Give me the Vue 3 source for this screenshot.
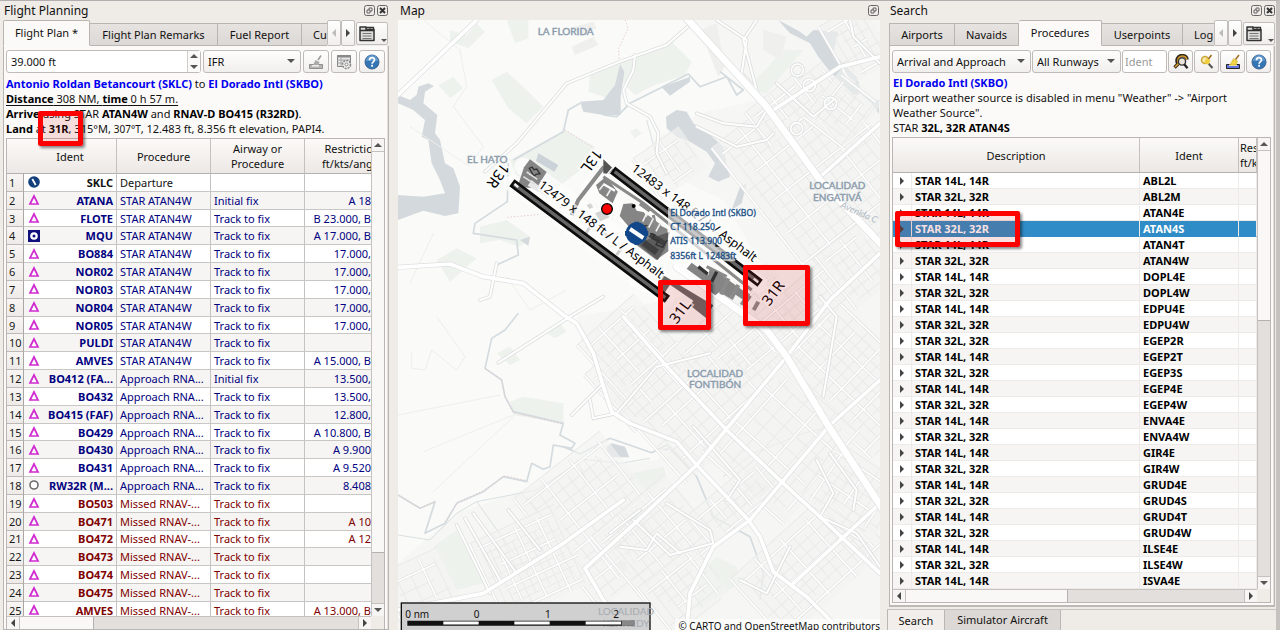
<script setup>
const planRows = [
  ['SKLC', 'Departure', '', '', 'airport'],
  ['ATANA', 'STAR ATAN4W', 'Initial fix', 'A 18', 'fix'],
  ['FLOTE', 'STAR ATAN4W', 'Track to fix', 'B 23.000, B', 'fix'],
  ['MQU', 'STAR ATAN4W', 'Track to fix', 'A 17.000, B', 'vor'],
  ['BO884', 'STAR ATAN4W', 'Track to fix', '17.000,', 'fix'],
  ['NOR02', 'STAR ATAN4W', 'Track to fix', '17.000,', 'fix'],
  ['NOR03', 'STAR ATAN4W', 'Track to fix', '17.000,', 'fix'],
  ['NOR04', 'STAR ATAN4W', 'Track to fix', '17.000,', 'fix'],
  ['NOR05', 'STAR ATAN4W', 'Track to fix', '17.000,', 'fix'],
  ['PULDI', 'STAR ATAN4W', 'Track to fix', '', 'fix'],
  ['AMVES', 'STAR ATAN4W', 'Track to fix', 'A 15.000, B', 'fix'],
  ['BO412 (FA...', 'Approach RNA...', 'Initial fix', '13.500,', 'fix'],
  ['BO432', 'Approach RNA...', 'Track to fix', '13.500,', 'fix'],
  ['BO415 (FAF)', 'Approach RNA...', 'Track to fix', '12.800,', 'fix'],
  ['BO429', 'Approach RNA...', 'Track to fix', 'A 10.800, B', 'fix'],
  ['BO430', 'Approach RNA...', 'Track to fix', 'A 9.900', 'fix'],
  ['BO431', 'Approach RNA...', 'Track to fix', 'A 9.520', 'fix'],
  ['RW32R (M...', 'Approach RNA...', 'Track to fix', '8.408', 'runway'],
  ['BO503', 'Missed RNAV-...', 'Track to fix', '', 'fix'],
  ['BO471', 'Missed RNAV-...', 'Track to fix', 'A 10', 'fix'],
  ['BO472', 'Missed RNAV-...', 'Track to fix', 'A 12', 'fix'],
  ['BO473', 'Missed RNAV-...', 'Track to fix', '', 'fix'],
  ['BO474', 'Missed RNAV-...', 'Track to fix', '', 'fix'],
  ['BO475', 'Missed RNAV-...', 'Track to fix', '', 'fix'],
  ['AMVES', 'Missed RNAV-...', 'Track to fix', 'A 13.000, B', 'fix'],
].map(([ident, proc, airway, limit, icon], i) => ({
  n: i + 1, ident, proc, airway, limit, icon,
  tone: i === 0 ? 'dep' : i < 18 ? 'star' : 'missed',
}))

const north = 'STAR 14L, 14R'
const south = 'STAR 32L, 32R'
const procRows = [
  ['ABL2L', north], ['ABL2M', south], ['ATAN4E', north], ['ATAN4S', south],
  ['ATAN4T', north], ['ATAN4W', south], ['DOPL4E', north], ['DOPL4W', south],
  ['EDPU4E', north], ['EDPU4W', south], ['EGEP2R', south], ['EGEP2T', north],
  ['EGEP3S', south], ['EGEP4E', north], ['EGEP4W', south], ['ENVA4E', north],
  ['ENVA4W', south], ['GIR4E', north], ['GIR4W', south], ['GRUD4E', north],
  ['GRUD4S', south], ['GRUD4T', north], ['GRUD4W', south], ['ILSE4E', north],
  ['ILSE4W', south], ['ISVA4E', north],
]

// Street blocks: centre x, centre y, angle, width, height, spacing
const blocks = [
  [1290, 520, -38, 420, 520, 34], [1180, 330, -38, 190, 130, 30], [1400, 130, -30, 150, 200, 26],
  [840, 490, -35, 170, 150, 32], [1010, 1120, -42, 620, 330, 38], [760, 1120, -42, 270, 230, 32],
  [720, 1040, -42, 230, 220, 28], [1390, 1130, -46, 280, 420, 30], [1180, 1330, -48, 360, 330, 44],
  [630, 1560, -38, 330, 420, 34], [420, 1690, -25, 280, 260, 24], [800, 1620, -40, 290, 270, 36],
  [1260, 1690, -42, 420, 250, 32], [1390, 1480, -56, 210, 250, 30], [1030, 1510, -40, 260, 120, 28],
  [90, 1760, -25, 190, 170, 42], [880, 1770, -38, 210, 180, 30], [1190, 960, -40, 500, 140, 27],
  [1400, 800, -38, 160, 200, 30], [1360, 330, -52, 180, 160, 28],
]
function grid(w, h, s) {
  let wide = ''
  let fine = ''
  let i = 0
  for (let x = -w / 2; x <= w / 2; x += s, i++) {
    const a = ((i * 37) % 11) * 5
    const d = `M${x} ${-h / 2 + a}V${h / 2 - ((i * 23) % 9) * 6}`
    if (i % 3 === 0) wide += d
    else fine += d
  }
  i = 0
  for (let y = -h / 2; y <= h / 2; y += s, i++) {
    const a = ((i * 29) % 13) * 5
    const d = `M${-w / 2 + a} ${y}H${w / 2 - ((i * 17) % 7) * 8}`
    if (i % 3 === 1) wide += d
    else fine += d
  }
  return { wide, fine }
}
const streets = blocks.map(([x, y, r, w, h, s]) => ({
  t: `translate(${x} ${y}) rotate(${r})`, w, h, ...grid(w, h, s),
}))

const minorRoads = [
  'M285 515L380 430L530 250L690 185L830 135L905 70',
  'M735 165L730 210L700 270L710 310L780 350L805 400L800 460L830 520',
  'M980 60L1070 120L1055 220L1100 270L1060 120L1100 60',
  'M325 1088L540 950L640 890', 'M545 1245L640 1150', 'M320 790L300 890L270 900',
  'M920 340L1000 370L1100 380L1130 330L1190 390', 'M920 380L1040 440L1130 420L1150 400',
  'M660 1600L750 1530', 'M355 1530L450 1650', 'M830 1510L960 1590L970 1630L840 1665L730 1560',
  'M1050 1740L1130 1780L1200 1640', 'M1290 890L1340 950L1300 1190', 'M200 1575L300 1780M225 1555L330 1740M250 1540L380 1720',
  'M1280 1380L1330 1480L1290 1550L1400 1600L1470 1700', 'M1320 1360L1400 1470L1390 1530',
  'M600 1200L610 1255L680 1240L800 1100L960 1060', 'M910 1280L1050 1440L1010 1500',
  'M1380 60L1390 110L1470 190', 'M1160 250L1270 350L1330 300', 'M690 1640L770 1650L800 1600L870 1660',
]
const majorRoads = [
  'M24 285L260 60', 'M24 802L180 792L280 830L400 850L520 945L560 970L610 1060L640 1160L665 1235L720 1270L860 1325L920 1395L1075 1560L1110 1610L1150 1715L1250 1790L1350 1890',
  'M585 1705L740 1565L920 1395L1190 1070L1320 900L1470 760',
  'M890 1890L900 1780L970 1640L1080 1560L1320 1275L1470 1140', 'M585 1705L640 1800L680 1850',
  'M700 950L840 1110L1010 1290L1180 1450L1300 1560L1470 1720', 'M24 1830L280 1780L520 1630L700 1500',
  'M1210 1750L1470 1510', 'M1280 540L1470 370', 'M1150 330L1350 200L1470 170',
]
</script>

<template>
  <div class="workspace">
    <section class="dock plan-dock">
      <header class="dock-title">
        <h2>Flight Planning</h2>
        <button class="mini" aria-label="Float panel"><svg viewBox="0 0 11 11"><rect x=".5" y=".5" width="10" height="10" rx="2" /><path d="M3 5h3v3H3zM5 5V3h3v3H6" /></svg></button>
        <button class="mini" aria-label="Close panel"><svg viewBox="0 0 11 11"><rect x=".5" y=".5" width="10" height="10" rx="2" /><path class="bold" d="M3 3l5 5M8 3L3 8" /></svg></button>
      </header>
      <nav class="tabs">
        <button class="tab on w-plan">Flight Plan *</button>
        <button class="tab w-remarks">Flight Plan Remarks</button>
        <button class="tab w-fuel">Fuel Report</button>
        <button class="tab cut">Cu</button>
        <button class="tab-nav" aria-label="Previous tabs"><i class="tri left dim"></i></button>
        <button class="tab-nav" aria-label="Next tabs"><i class="tri right"></i></button>
        <button class="tab-menu" aria-label="Tab menu"><svg viewBox="0 0 16 16"><path d="M1 14.500V1h6v2.500h8v11z" fill="#dededc" stroke="#333" stroke-width="1.500" stroke-linejoin="round" /><path d="M7 1.500h7.500V4" stroke="#333" stroke-width="1.300" fill="none" /><path d="M11 1.500v2" stroke="#333" /><path d="M1 4.500h14" stroke="#333" stroke-width="1.500" /><path d="M3.500 7.500h9M3.500 10h9M3.500 12.500h9" stroke="#777" /></svg><i class="tri down small"></i></button>
      </nav>
      <div class="pane plan-pane">
        <div class="toolbar">
          <div class="spin">
            <input value="39.000 ft" aria-label="Cruise altitude" />
            <span class="steps">
              <button aria-label="Increase"><i class="tri up"></i></button>
              <button aria-label="Decrease"><i class="tri down"></i></button>
            </span>
          </div>
          <div class="combo rules"><select aria-label="Flight rules"><option>IFR</option></select><i class="tri down"></i></div>
          <button class="tool" aria-label="Clean up"><svg viewBox="0 0 16 16"><path d="M1.500 10.500h13v4h-13z" fill="#b5b5b5" stroke="#8f8f8f" /><path d="M4 11h7v1.500H4z" fill="#eee" /><path d="M13 1.500L10 6" stroke="#999" stroke-width="1.500" /><path d="M7.500 6l4 2-1 3H5z" fill="#aaa" /></svg></button>
          <button class="tool" aria-label="Table settings"><svg viewBox="0 0 16 16"><path d="M1.500 1.500h13v11h-13z" fill="#e6e6e6" stroke="#888" /><path d="M1 2.500h14" stroke="#888" stroke-width="2" /><path d="M2 6h12M2 9h12M5 4v8" stroke="#aaa" /><circle cx="10.500" cy="10.500" r="4" fill="#eee" stroke="#888" stroke-width="1.500" stroke-dasharray="2 1" /><circle cx="10.500" cy="10.500" r="1.500" fill="#fff" stroke="#888" /></svg></button>
          <button class="tool" aria-label="Help"><svg viewBox="0 0 16 16"><circle cx="8" cy="8" r="7" fill="#3475b4" stroke="#3b6390" /><path d="M2 7a6 6 0 0 1 12 0z" fill="#5f97cc" /><path d="M5.500 6.200c0-3.400 5-3.400 5-.3 0 1.900-2.400 2-2.400 3.800M8.100 10.800v1.900" stroke="#fff" stroke-width="1.700" fill="none" /></svg></button>
        </div>
        <div class="summary">
          <p><a href="#sklc">Antonio Roldan Betancourt (SKLC)</a> to <a href="#skbo">El Dorado Intl (SKBO)</a></p>
          <p><u><b>Distance</b> 308 NM, <b>time</b> 0 h 57 m.</u></p>
          <p><b>Arrive</b> using STAR <b>ATAN4W</b> and <b>RNAV-D BO415 (R32RD)</b>.</p>
          <p><b>Land</b> at <b>31R</b>, 315°M, <small>307°T</small>, 12.483 ft, 8.356 ft elevation, PAPI4.</p>
          <div class="mark mark-land"></div>
        </div>
        <div class="grid-frame">
          <div class="clip">
            <table class="plan">
              <colgroup><col class="c-num" /><col class="c-ico" /><col class="c-ident" /><col class="c-proc" /><col class="c-proc" /><col /></colgroup>
              <thead><tr><th></th><th colspan="2">Ident</th><th>Procedure</th><th>Airway or<br />Procedure</th><th><span class="wide-head">Restriction<br />ft/kts/angle</span></th></tr></thead>
              <tbody>
                <tr v-for="r in planRows" :key="r.n" :class="r.tone">
                  <th scope="row">{{ r.n }}</th>
                  <td class="ico">
                    <svg viewBox="0 0 12 12">
                      <path v-if="r.icon === 'fix'" d="M6 2L10 10H2z" fill="#fff" stroke="#d02ad0" stroke-width="1.700" />
                      <g v-else-if="r.icon === 'airport'"><circle cx="6" cy="6" r="5.800" fill="#123f7c" /><path d="M4.300 3l3.400 6" stroke="#fff" stroke-width="1.800" /></g>
                      <g v-else-if="r.icon === 'vor'"><path d="M0 0h12v12H0z" fill="#10107c" /><circle cx="6" cy="6" r="3.800" fill="#fff" /><circle cx="6" cy="6" r="1.500" fill="#10107c" /></g>
                      <circle v-else cx="6" cy="6" r="4" fill="#fff" stroke="#6c6c6c" stroke-width="1.600" />
                    </svg>
                  </td>
                  <td class="ident">{{ r.ident }}</td>
                  <td>{{ r.proc }}</td>
                  <td>{{ r.airway }}</td>
                  <td class="limit">{{ r.limit }}</td>
                </tr>
              </tbody>
            </table>
          </div>
          <div class="vbar plan-vbar"><button aria-label="Scroll up"><i class="tri up"></i></button><div class="track"><div class="thumb"></div></div><button aria-label="Scroll down"><i class="tri down"></i></button></div>
          <div class="hbar plan-hbar"><button aria-label="Scroll left"><i class="tri left"></i></button><div class="track"><div class="thumb"></div></div><button aria-label="Scroll right"><i class="tri right"></i></button></div>
          <div class="corner"></div>
        </div>
      </div>
    </section>

    <section class="dock map-dock">
      <header class="dock-title">
        <h2>Map</h2>
        <button class="mini" aria-label="Float panel"><svg viewBox="0 0 11 11"><rect x=".5" y=".5" width="10" height="10" rx="2" /><path d="M3 5h3v3H3zM5 5V3h3v3H6" /></svg></button>
      </header>
      <div class="map">
        <svg class="chart" viewBox="24 60 1446 1830" preserveAspectRatio="xMinYMin slice" role="img" aria-label="Map of El Dorado Intl">
          <rect x="24" y="60" width="2400" height="1830" fill="#fafaf8" />
          <!-- built-up areas -->
          <path d="M900 60H1480V1890H24V1690L200 1540L400 1470L590 1400L800 1380L870 1330L680 1260L640 1150L560 950L830 900L1130 820L1000 600L830 520L790 420L930 340L1100 300L1000 180Z" fill="#f6f6f4" />
          <!-- parks and fields -->
          <g fill="#eef2ed">
            <path d="M305 240l45-25 60 55 50 50-50 50-55-45zM145 255l45-25 30 35-40 30zM350 60h65v55l-40 15zM180 90l50 15 30-35 25 25-50 50-55-20zM600 220l95-40 150-55 60 60-20 40-90 30-60 30-40-40-40 50-60-20zM360 480l165-90 90 50-30 60-120 90-85-60zM140 780l60-35 60 30-80 70zM270 680l80-20 70 50-30 30-60-20-60 10zM360 1205l40-15 120 20 0 60-150-25zM130 1640l70-50 80 160-80 20z" />
            <path d="M980 1670l60 30 10 50-130 80 10-110zM1060 1420l60-50 50 60-60 60-50 30zM470 1000l40-30 20 25-35 20zM700 1425l120-25 10 30-50 50zM1070 270l110-120 60 0-110 130zM720 395l20-10 15 15-20 15zM320 1060l40-20 30 40-30 15z" />
          </g>
          <g fill="#efefed">
            <path d="M545 140l65-30 15 25-70 30zM550 80l60-15 10 20-55 25zM930 90l50-20 25 130-20 30zM1120 90l70 20-20 70-50-30z" />
          </g>
          <!-- water -->
          <g fill="#d3d9dc">
            <path d="M24 285L60 300L80 285L85 260L115 250L132 258L105 275L100 310L142 345L135 400L150 420L165 490L190 505L210 560L205 640L165 648L100 632L24 660V585L100 590L165 580L150 540L125 490L115 420L95 410L105 360L70 330L24 310Z" />
            <path d="M690 193L703 215L692 290L692 345L640 345L580 335L570 305L640 300L675 255Z" />
            <path d="M828 350L860 330L890 335L910 370L960 405L1000 440L1012 500L1020 530L985 545L955 530L975 490L950 455L900 425L860 410L830 385Z" />
            <path d="M1165 60L1230 95L1250 110L1270 90L1345 95L1330 160L1400 230L1415 280L1390 285L1320 215L1285 170L1260 130L1200 100Z" />
            <path d="M815 262L900 230L900 245L840 287ZM650 1340L665 1330L705 1340L718 1372L655 1372ZM390 720l30-10-5 28zM680 1670l30 18-5 30-22-22zM812 1347l25-2-5 8zM1068 1085l20-5-15 35-10 10zM1050 560l20-10-15 60-30 20zM1412 282l55 20v40l-20-30z" />
          </g>
          <g fill="none" stroke="#d3dbdf" stroke-width="5" stroke-linejoin="round">
            <path d="M570 310L535 330L520 395L440 440L370 480M640 345L680 350L720 310L895 222L930 260L1010 230L1040 285L1060 270L990 215M385 940L345 990L305 1015L285 1105L335 1140L345 1190L370 1235L520 1270L510 1305L555 1330L545 1345L490 1335L480 1400L460 1408L425 1390L410 1445L340 1430L280 1475L200 1510L165 1570L105 1600L135 1505L90 1525L24 1485" />
            <path d="M520 1340L570 1362L660 1315L785 1358L830 1335L920 1430L970 1550L1080 1610L1120 1720L1110 1800M355 490L352 605L255 670L250 700L380 720L385 765L320 795" />
          </g>
          <g fill="none" stroke="#d9e0e3" stroke-width="3">
            <path d="M24 1605L120 1620L200 1540L260 1505L440 1470L580 1378L690 1390L780 1375M260 1505L375 1665M390 1475L540 1650M1090 1360L1330 1600M1090 1360L1000 1430M1090 1360L1240 1300L1300 1285M560 1380L600 1460" />
            <path d="M620 540L560 610M800 470L770 360M1180 290L1240 220M1470 300L1380 420" />
          </g>
          <g fill="none" stroke="#eeeeec" stroke-width="3">
            <path d="M24 1245L330 1185M100 1355L370 1245M130 1475L370 1250M65 1055v50l40 5 20-60 75 60 25-40L140 950M100 60L210 150L230 260L190 320L280 440L250 480M60 380L240 500M130 700L60 850M350 830L420 930L530 870" />
          </g>
          <g fill="none" stroke="#e9c8cc" stroke-width="3" stroke-dasharray="4 6">
            <path d="M706 60l8 25-28 60 2 45M525 390l80 50M285 1105l50 35 10 50 25 48 150 35M24 1485l66 40 45-20M165 1565l40-60 70-30 70-48 65 15M352 652l90-8 70-22" />
          </g>
          <!-- streets -->
          <g v-for="(s, i) in streets" :key="i" :transform="s.t" fill="none">
            <rect :x="-s.w / 2" :y="-s.h / 2" :width="s.w" :height="s.h" fill="#f3f3f1" opacity=".6" />
            <path :d="s.fine" stroke="#eaeae9" stroke-width="3" />
            <path :d="s.wide" stroke="#e2e2e2" stroke-width="9" />
            <path :d="s.wide" stroke="#fff" stroke-width="5" />
          </g>
          <g fill="none" stroke="#dddfdf" stroke-linejoin="round" stroke-linecap="round">
            <path v-for="d in minorRoads" :key="d" :d="d" stroke-width="11" />
            <path v-for="d in majorRoads" :key="d" :d="d" stroke-width="15" />
            <circle v-for="p in [[1222, 210], [1258, 256], [1322, 310], [1220, 386]]" :key="p[0]" :cx="p[0]" :cy="p[1]" r="18" stroke-width="10" />
          </g>
          <g fill="none" stroke="#fff" stroke-linejoin="round" stroke-linecap="round">
            <path v-for="d in minorRoads" :key="d" :d="d" stroke-width="6" />
            <path v-for="d in majorRoads" :key="d" :d="d" stroke-width="11" />
            <circle v-for="p in [[1222, 210], [1258, 256], [1322, 310], [1220, 386]]" :key="p[0]" :cx="p[0]" :cy="p[1]" r="18" stroke-width="5" />
            <path d="M890 55L1130 320L1290 540L1480 740M860 800L1130 990L1190 1070L1310 1270L1480 1530" stroke="#e2e4e4" stroke-width="25" />
            <path d="M890 55L1130 320L1290 540L1480 740M860 800L1130 990L1190 1070L1310 1270L1480 1530" stroke-width="20" />
          </g>
          <!-- place names -->
          <g class="place">
            <text x="527" y="105">LA FLORIDA</text>
            <text x="292" y="488">EL HATO</text>
            <text x="1342" y="568">LOCALIDAD</text>
            <text x="1342" y="602">ENGATIVÁ</text>
            <text x="975" y="1130">LOCALIDAD</text>
            <text x="975" y="1164">FONTIBÓN</text>
            <text class="street" transform="translate(1350 622) rotate(24)">Avenida C</text>
          </g>
          <!-- aprons and taxiways -->
          <g fill="none" stroke="#fcfcfb" stroke-width="54" stroke-linecap="round" opacity=".85"><path d="M370 550L828 895M640 500L1105 852M400 500L800 790M600 560L940 830" /></g>
          <g fill="#858585">
            <path d="M420 478l50 38-30 48-58-2 20-60z" />
            <path d="M425 540l30 25-8 12-34-20z" fill="#e8e8e8" />
            <path d="M700 612l28-2 12 22 22 5 10 20 60 30 5 65-38 28-60-45-20-52-30-35z" />
            <path d="M740 730l100-35-15 50-22 35z" fill="#5c5c5c" />
            <path d="M618 555l30-25 35 45-15 35-40-30zM960 800l125 90-12 18-45-30-10 16-30-18-12 10-28-22zM905 788l55 40-10 22-60-44z" />
            <path d="M755 735l40 30 12-16-40-28zM775 710l45 28 8-14-42-26z" fill="#3f3f3f" />
            <path d="M590 615l12-5 8 12-12 5zM615 640l24-10 20 22-28 12z" fill="#d4d4d4" />
            <path d="M820 826l150 90-22 38-48-38 10-14-70-48-20 30-20-18z" fill="#666" />
          </g>
          <g fill="none" stroke="#8a8a8a">
            <path d="M642 500L565 600L545 645" stroke-width="12" />
            <path d="M640 530L760 610L1085 870M790 645l10 50M950 800L1010 830" stroke-width="9" />
            <path d="M640 700l20 12M700 735l-20 30M600 680l-12 20" stroke-width="9" stroke="#ccc" />
            <path d="M750 610l30 22M640 555l40 25M770 650l40 30M1015 835l-22 48M1045 855l-22 42M1075 880l-20 35M1105 905l-14 25" stroke-width="12" />
            <path d="M925 800l28 22M980 815l-15 30" stroke="#333" stroke-width="10" />
            <path d="M640 552l35 20M740 620l25 14M720 850l60 30" stroke="#fff" stroke-width="7" />
            <path d="M628 570l14-18M650 588l12-20M770 640l-12 25M790 655l-14 28M812 668l-14 26M900 640l150 110" stroke="#eee" stroke-width="5" />
          </g>
          <path d="M640 478l30 28-14 16-16-2z" fill="#555" />
          <path d="M650 525l18-22" stroke="#fff" stroke-width="4" />
          <path d="M445 460l60 35-12 20-55-32z" fill="#cbd2d8" />
          <path d="M418 505l8-4 6 8 8-2 10 14-12 2-6 6z" fill="none" stroke="#333" stroke-width="4" />
          <path d="M400 530l34 22M410 516l32 22" stroke="#ddd" stroke-width="5" />
          <path d="M780 700l14 4-6 12 18 6-8 12 20 8 14-22M770 690l-8-12 10-2" fill="none" stroke="#333" stroke-width="4" />
          <!-- runways -->
          <g stroke-linecap="square">
            <path d="M376 556L822 890M678 518L1100 842" stroke="#0c0c0c" stroke-width="26" />
            <path d="M376 556L822 890M678 518L1100 842" stroke="#666" stroke-width="10" />
            <path d="M376 554l6 5M1094 838l8 7" stroke="#eee" stroke-width="7" />
          </g>
          <g class="rwy">
            <text transform="translate(443 560) rotate(37)">12479 x 148 ft / L / Asphalt</text>
            <text transform="translate(722 510) rotate(37)">12483 x 148 ft / L / Asphalt</text>
          </g>
          <g class="rwy-num">
            <text transform="translate(336 486) rotate(127)">13R</text>
            <text transform="translate(615 444) rotate(127)">13L</text>
            <text transform="translate(860 974) rotate(-53)">31L</text>
            <text transform="translate(1138 920) rotate(-53)">31R</text>
          </g>
          <circle cx="651" cy="627" r="16" fill="#f00" stroke="#000" stroke-width="4" />
          <circle cx="731" cy="618" r="6" />
          <circle cx="740" cy="700" r="33" fill="#12488a" /><path d="M740 665v70M705 700h70" stroke="#12488a" stroke-width="14" />
          <path d="M720 687l40 27" stroke="#fff" stroke-width="12" />
          <path d="M834 624h262v32H976v84h60v44H834z" fill="#fff" opacity=".65" />
          <g class="airport">
            <text x="841" y="649">El Dorado Intl (SKBO)</text>
            <text x="841" y="691">CT 118.250</text>
            <text x="841" y="733">ATIS 113.900</text>
            <text x="841" y="776">8356ft L 12483ft</text>
          </g>
          <!-- scale bar -->
          <rect x="34" y="1809" width="746" height="90" fill="#cdcdcd" fill-opacity=".95" stroke="#111" stroke-width="4" />
          <g class="place faded"><text x="708" y="1846">LOCALIDAD</text><text x="708" y="1880">KENNEDY</text></g>
          <path d="M52 1870H733" stroke="#111" stroke-width="15" />
          <path d="M160 1869h106M373 1869h106M587 1869h106" stroke="#fff" stroke-width="9" />
          <path d="M695 1870h38" stroke="#888" stroke-width="15" />
          <g class="scale"><text x="46" y="1855">0 nm</text><text x="251" y="1855">0</text><text x="465" y="1855">1</text><text x="670" y="1855">2</text></g>
        </svg>
        <div class="mark mark-31l"></div>
        <div class="mark mark-31r"></div>
        <p class="credit">© CARTO and OpenStreetMap contributors</p>
      </div>
    </section>

    <section class="dock search-dock">
      <header class="dock-title">
        <h2>Search</h2>
        <button class="mini" aria-label="Float panel"><svg viewBox="0 0 11 11"><rect x=".5" y=".5" width="10" height="10" rx="2" /><path d="M3 5h3v3H3zM5 5V3h3v3H6" /></svg></button>
        <button class="mini" aria-label="Close panel"><svg viewBox="0 0 11 11"><rect x=".5" y=".5" width="10" height="10" rx="2" /><path class="bold" d="M3 3l5 5M8 3L3 8" /></svg></button>
      </header>
      <nav class="tabs">
        <button class="tab w-airports">Airports</button>
        <button class="tab w-navaids">Navaids</button>
        <button class="tab on w-procs">Procedures</button>
        <button class="tab w-user">Userpoints</button>
        <button class="tab cut">Log</button>
        <button class="tab-nav" aria-label="Previous tabs"><i class="tri left dim"></i></button>
        <button class="tab-nav" aria-label="Next tabs"><i class="tri right"></i></button>
        <button class="tab-menu" aria-label="Tab menu"><svg viewBox="0 0 16 16"><path d="M1 14.500V1h6v2.500h8v11z" fill="#dededc" stroke="#333" stroke-width="1.500" stroke-linejoin="round" /><path d="M7 1.500h7.500V4" stroke="#333" stroke-width="1.300" fill="none" /><path d="M11 1.500v2" stroke="#333" /><path d="M1 4.500h14" stroke="#333" stroke-width="1.500" /><path d="M3.500 7.500h9M3.500 10h9M3.500 12.500h9" stroke="#777" /></svg><i class="tri down small"></i></button>
      </nav>
      <div class="pane search-pane">
        <div class="toolbar tight">
          <div class="combo kind"><select aria-label="Procedure type"><option>Arrival and Approach</option></select><i class="tri down"></i></div>
          <div class="combo runways"><select aria-label="Runway"><option>All Runways</option></select><i class="tri down"></i></div>
          <input class="ident-filter" placeholder="Ident" aria-label="Ident" />
          <button class="tool" aria-label="Find on map"><svg viewBox="0 0 16 16"><path d="M1.500 13.500L5 10C2.500 6 5 1.500 9 1.500c3 0 5 1.500 5 4" fill="none" stroke="#2c2618" stroke-width="3.400" /><path d="M2 13L5.500 9.500C3.500 6 6 2 9 2c2.500 0 4.500 1.500 4.500 3.500" fill="none" stroke="#d79a2c" stroke-width="1.700" /><circle cx="9" cy="7.500" r="3.600" fill="#e9e4da" stroke="#333" stroke-width="1.400" /><path d="M11.200 10.200l3.300 4" stroke="#222" stroke-width="2.200" /></svg></button>
          <button class="tool" aria-label="Reset search"><svg viewBox="0 0 16 16"><circle cx="6" cy="6" r="3.500" fill="#f6e7ae" stroke="#cba63a" stroke-width="1.500" /><path d="M8.500 8.500l5 5.500" stroke="#555" stroke-width="2" /><path d="M12.500 1L9.500 5" stroke="#a06a20" stroke-width="1.500" /><path d="M7.500 4l4 2.500-2 4L5 9z" fill="#f0d040" /></svg></button>
          <button class="tool" aria-label="Clear selection"><svg viewBox="0 0 16 16"><path d="M1.500 10.500h13v4h-13z" fill="#6676e0" stroke="#222" /><path d="M4 10.500h8v1.500H4z" fill="#f5f1b8" /><path d="M14 1L10.500 5.500" stroke="#a06a20" stroke-width="1.500" /><path d="M8.500 4.500l4 2.500-1.500 4H5z" fill="#f3d445" stroke="#c4a224" stroke-width=".5" /></svg></button>
          <button class="tool" aria-label="Help"><svg viewBox="0 0 16 16"><circle cx="8" cy="8" r="7" fill="#3475b4" stroke="#3b6390" /><path d="M2 7a6 6 0 0 1 12 0z" fill="#5f97cc" /><path d="M5.500 6.200c0-3.400 5-3.400 5-.3 0 1.900-2.400 2-2.400 3.800M8.100 10.800v1.900" stroke="#fff" stroke-width="1.700" fill="none" /></svg></button>
        </div>
        <div class="summary">
          <p><a href="#skbo">El Dorado Intl (SKBO)</a></p>
          <p>Airport weather source is disabled in menu "Weather" -&gt; "Airport<br />Weather Source".</p>
          <p>STAR <b>32L, 32R ATAN4S</b></p>
        </div>
        <div class="grid-frame">
          <div class="clip">
            <table class="procs">
              <colgroup><col class="c-exp" /><col /><col class="c-id" /><col class="c-res" /></colgroup>
              <thead><tr><th colspan="2">Description</th><th>Ident</th><th><span class="res-head">Restr.<br />ft/kts</span></th></tr></thead>
              <tbody>
                <tr v-for="[id, desc] in procRows" :key="id" :class="{ sel: id === 'ATAN4S' }">
                  <td><button class="expand" :aria-label="'Expand ' + id"><i class="tri right"></i></button></td>
                  <td>{{ desc }}</td>
                  <td>{{ id }}</td>
                  <td></td>
                </tr>
              </tbody>
            </table>
            <div class="mark mark-row"></div>
          </div>
          <div class="vbar search-vbar"><button aria-label="Scroll up"><i class="tri up"></i></button><div class="track"><div class="thumb"></div></div><button aria-label="Scroll down"><i class="tri down"></i></button></div>
          <div class="hbar search-hbar"><button aria-label="Scroll left"><i class="tri left"></i></button><div class="track"><div class="thumb"></div></div><button aria-label="Scroll right"><i class="tri right"></i></button></div>
          <div class="corner"></div>
        </div>
      </div>
      <nav class="bottom-tabs">
        <button class="btab on">Search</button>
        <button class="btab">Simulator Aircraft</button>
      </nav>
    </section>
  </div>
</template>

<style>
body { margin: 0; background: #efebe7; }
</style>

<style scoped>
* { box-sizing: border-box; }
.workspace {
  display: flex; gap: 9px; height: 100vh; overflow: hidden;
  background: #efebe7; border-top: 1px solid #b5aeb0; border-right: 4px solid #c6c2bf;
  font: 11px/15px "Noto Sans", sans-serif; color: #111;
}
button, input, select { font: inherit; color: inherit; margin: 0; }
button { padding: 0; border: 0; background: none; }
p, h2 { margin: 0; font-weight: 400; }
h2 { font-size: 12px; }
.dock { display: flex; flex-direction: column; min-width: 0; }
.plan-dock { flex: 0 0 389px; padding-left: 3px; }
.map-dock { flex: 1; }
.search-dock { flex: 0 0 387px; }
.dock-title { display: flex; flex: none; align-items: center; gap: 2px; height: 19px; padding: 0 1px; }
.dock-title h2 { flex: 1; }
.map-dock .dock-title h2 { padding-left: 1px; }
.mini { width: 11px; height: 11px; }
.mini svg { display: block; width: 11px; height: 11px; fill: none; stroke: #666; }
.mini .bold { stroke: #333; stroke-width: 2; }

.tabs { display: flex; flex: none; align-items: flex-end; height: 26px; }
.tab { flex: none; height: 23px; border: 1px solid #b9b5b1; border-left: 0; background: linear-gradient(#e6e3e0, #dcd8d5); white-space: nowrap; overflow: hidden; }
.tab:first-child { border-left: 1px solid #b9b5b1; }
.tab.on { height: 26px; padding-bottom: 2px; background: #fcfaf8; border-bottom-color: #fcfaf8; border-radius: 2px 2px 0 0; }
.tab.cut { flex: 1; min-width: 0; padding-left: 11px; text-align: left; border-right: 0; }
.w-plan { width: 87px; } .w-remarks { width: 128px; } .w-fuel { width: 84px; }
.w-airports { width: 66px; } .w-navaids { width: 64px; } .w-procs { width: 83px; } .w-user { width: 81px; }
.tab-nav { display: flex; flex: none; align-items: center; justify-content: center; width: 14px; height: 26px; border: 1px solid #c2bebb; border-radius: 2px; background: linear-gradient(#fff, #f1efed); }
.tab-menu { display: flex; flex: none; align-items: center; gap: 6px; width: 32px; height: 23px; padding-left: 2px; margin: 0 1px 1px 1px; border: 1px solid #c2bebb; border-radius: 2px; background: linear-gradient(#fdfdfc, #f0eeec); }
.tab-menu svg { flex: none; width: 16px; height: 16px; }
.tab-menu .tri { margin-top: 14px; }

.tri { display: inline-block; flex: none; width: 0; height: 0; border: 0 solid transparent; }
.tri.down { border-width: 4px 4px 0; border-top-color: #555; }
.tri.up { border-width: 0 4px 4px; border-bottom-color: #555; }
.tri.left { border-width: 4px 4px 4px 0; border-right-color: #444; }
.tri.right { border-width: 4px 0 4px 4px; border-left-color: #444; }
.tri.small { border-width: 3px 3px 0; }
.tri.dim { border-right-color: #bbb; }

.pane { display: flex; flex-direction: column; flex: 1; min-height: 0; padding: 4px 3px 0 2px; border: 1px solid #b9b5b1; border-top: 0; background: #fcfaf8; box-shadow: inset -1px 0 #e2dfdc; }
.search-pane { flex: 0 0 561px; margin-right: 1px; padding: 4px 3px 2px 2px; border-bottom: 2px solid #bdb9b6; }
.toolbar { display: flex; flex: none; gap: 2px; height: 23px; }
.toolbar.tight { gap: 1px; }
.tool { display: flex; flex: none; align-items: center; justify-content: center; width: 26px; border: 1px solid #bfbbb8; border-radius: 3px; background: linear-gradient(#fff, #f0eeec); }
.tool svg { flex: none; width: 16px; height: 16px; }
.tight .tool { width: 25px; }
.spin { display: flex; flex: 1; min-width: 0; border: 1px solid #bfbbb8; border-radius: 3px; background: #fff; }
.spin input { flex: 1; min-width: 0; padding: 0 4px; border: 0; background: none; outline: 0; }
.steps { display: flex; flex-direction: column; width: 13px; border-left: 1px solid #d0ccc9; background: #fbfaf9; }
.steps button { display: flex; flex: 1; align-items: center; justify-content: center; }
.combo { position: relative; flex: none; }
.combo select { width: 100%; height: 100%; padding: 0 4px; appearance: none; border: 1px solid #bfbbb8; border-radius: 3px; background: linear-gradient(#fdfdfc, #f1efed); }
.combo .tri { position: absolute; right: 6px; top: 9px; pointer-events: none; }
.rules { width: 98px; }
.kind { width: 139px; }
.runways { width: 89px; }
.ident-filter { flex: 1; min-width: 0; padding: 0 2px; border: 1px solid #bfbbb8; border-radius: 3px; background: #fff; }
.ident-filter::placeholder { color: #999; opacity: 1; }

.summary { position: relative; flex: none; height: 65px; padding-top: 3px; white-space: nowrap; }
.search-pane .summary { height: 64px; padding: 2px 0 0 1px; }
.summary a { color: #0000f0; font-weight: 700; text-decoration: none; }
.summary b { color: #000; }
.summary u { text-underline-offset: 2px; }
.summary small { font-size: 10px; }

.grid-frame { display: grid; flex: 1; min-height: 0; grid-template: minmax(0, 1fr) 13px / minmax(0, 1fr) 13px; border: 1px solid #bab6b3; }
.plan-pane .grid-frame { margin-bottom: -1px; }
.clip { position: relative; overflow: hidden; background: #fff; }
table { width: 100%; table-layout: fixed; border-collapse: separate; border-spacing: 0; }
th, td { padding: 0; font-weight: 400; white-space: nowrap; overflow: hidden; line-height: 15px; }
thead th { background: linear-gradient(#fcfaf8, #ebe8e5); border-right: 1px solid #c5c1be; border-bottom: 1px solid #b5b1ae; }
tbody tr:nth-child(even) { background: #f6f5f3; }
.plan { height: 481px; }
.plan thead th { height: 35px; }
.plan thead th:first-child { border-right: 0; }
.plan thead th:last-child, .plan td:last-child { border-right: 0; }
.plan tbody th { padding-left: 2px; text-align: left; background: linear-gradient(#f8f6f4, #edeae7); border-right: 1px solid #aaa6a3; border-bottom: 1px solid #bdb9b6; }
.plan td { padding-left: 3px; border-right: 1px solid #c5c3c1; border-bottom: 1px solid #c9c7c5; }
.plan .ico { padding-left: 4px; border-right: 0; }
.ico svg { display: block; width: 12px; height: 12px; }
.plan .ident { padding: 0 3px 0 0; text-align: right; font-weight: 700; }
.plan .limit { padding: 0; text-align: right; }
.c-num { width: 17px; } .c-ico { width: 20px; } .c-ident { width: 73px; } .c-proc { width: 94px; }
.wide-head { display: block; width: 94px; text-align: center; }
.dep { color: #111; } .star { color: #000080; } .missed { color: #800000; }
.plan tbody th { color: #1a1a1a; }

.procs { height: 450px; }
.procs thead th { height: 35px; }
.procs td { border-right: 1px solid #edeae7; border-bottom: 1px solid #edeae7; padding-left: 3px; font-weight: 700; color: #000; }
.procs td:first-child { padding: 0; }
.procs .sel { background: #308cc6; }
.procs .sel td { color: #fff; border-bottom-color: #308cc6; }
.c-exp { width: 19px; } .c-id { width: 99px; } .c-res { width: 18px; }
.expand { display: flex; align-items: center; justify-content: center; width: 100%; height: 14px; }
.res-head { display: block; width: 40px; padding-left: 1px; text-align: left; }

.vbar, .hbar { display: flex; background: #e3dfdc; }
.vbar { flex-direction: column; border-left: 1px solid #c5c1be; }
.hbar { border-top: 1px solid #c5c1be; }
.vbar button, .hbar button { display: flex; flex: 0 0 13px; align-items: center; justify-content: center; background: #f7f5f3; }
.vbar button:first-child { border-bottom: 1px solid #c5c1be; }
.vbar button:last-child { border-top: 1px solid #c5c1be; }
.hbar button:first-child { border-right: 1px solid #c5c1be; }
.hbar button:last-child { border-left: 1px solid #c5c1be; }
.track { flex: 1; min-height: 0; }
.thumb { background: #faf8f6; }
.vbar .thumb { border-bottom: 1px solid #b5b1ae; }
.hbar .thumb { height: 100%; border-right: 1px solid #b5b1ae; }
.plan-vbar .thumb { height: 89%; } .plan-hbar .thumb { width: 22%; }
.search-vbar .thumb { height: 40%; } .search-hbar .thumb { width: 48%; }
.corner { background: #efebe7; }

.bottom-tabs { display: flex; flex: 1; margin-top: 2px; margin-left: -2px; border-top: 1px solid #c5c1be; }
.btab { width: 116px; padding-bottom: 1px; border: 1px solid #bab6b3; border-width: 0 1px 0 0; background: #dcd8d5; }
.btab.on { width: 58px; padding-top: 2px; background: #f1eeeb; border-left-width: 1px; }

.map { position: relative; flex: 1; min-height: 0; overflow: hidden; background: #fafaf8; }
.chart { display: block; width: 100%; height: 100%; }
.place { font: 500 30px Lato, sans-serif; fill: #8b9cad; text-anchor: middle; stroke: #8b9cad; stroke-width: 1; }
.place .street { font-size: 28px; text-anchor: start; fill: #b3bcc4; stroke: none; font-style: italic; }
.place.faded { fill: #a8adb3; stroke: none; }
.rwy { font: 37px "Noto Sans", sans-serif; paint-order: stroke; stroke: #ffffffb0; stroke-width: 12; fill: #000; }
.rwy-num { font: 45px "Noto Sans", sans-serif; paint-order: stroke; stroke: #ffffffb0; stroke-width: 12; fill: #000; }
.airport { font: 26px "Noto Sans", sans-serif; fill: #1c5186; stroke: #1c5186; stroke-width: 1; }
.scale { font: 30px "Noto Sans", sans-serif; fill: #111; }
.credit { position: absolute; right: 0; bottom: -4px; padding-left: 3px; background: #ffffffa0; white-space: nowrap; font-size: 10px; color: #111; }

.mark { position: absolute; border: 5px solid #f00; border-radius: 2px; background: #d0202022; box-shadow: 2px 2px 3px #0007; pointer-events: none; }
.mark-land { left: 32px; top: 38px; width: 45px; height: 35px; z-index: 1; }
.mark-31l { left: 260px; top: 260px; width: 53px; height: 50px; }
.mark-31r { left: 345px; top: 245px; width: 67px; height: 61px; }
.mark-row { left: 2px; top: 73px; width: 125px; height: 36px; }
</style>
